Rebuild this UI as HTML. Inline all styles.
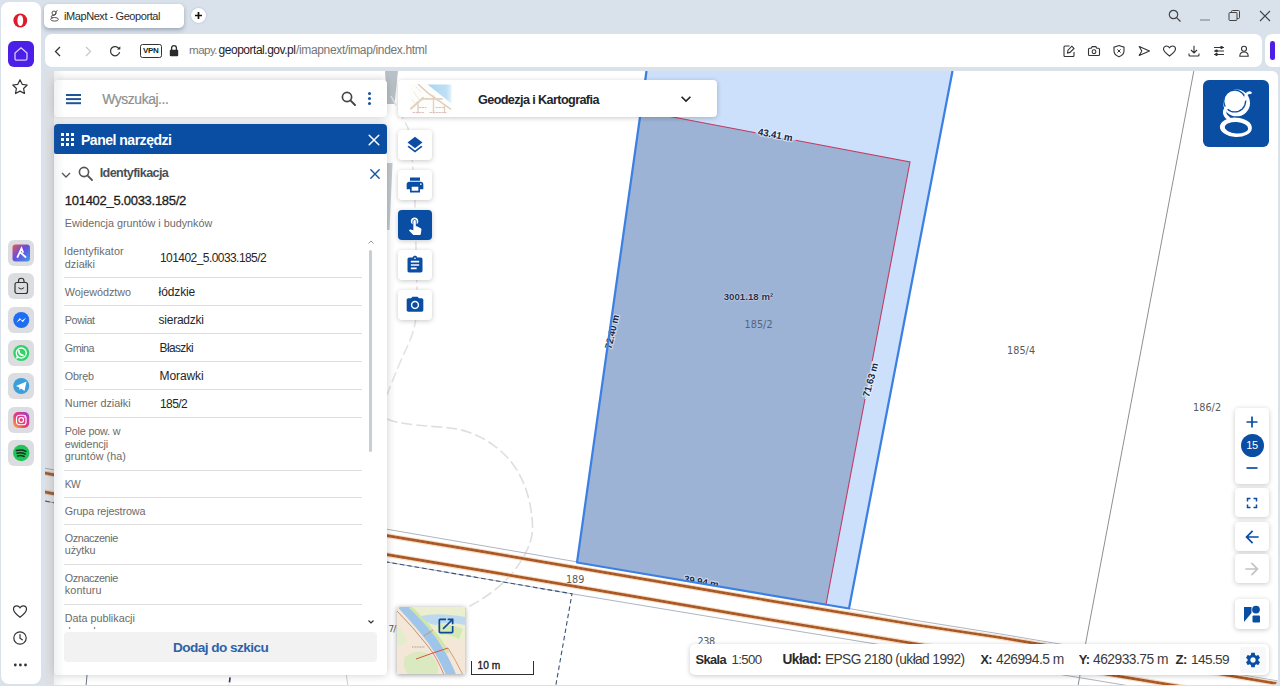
<!DOCTYPE html>
<html lang="pl"><head><meta charset="utf-8"><title>iMapNext - Geoportal</title>
<style>
*{box-sizing:border-box;margin:0;padding:0}
html,body{width:1280px;height:686px;overflow:hidden;background:#d9e1ea;font-family:"Liberation Sans",sans-serif;}
.abs{position:absolute}
#side{left:.5px;top:2px;width:40px;height:681.500px;background:#fff;border-radius:8px}
#tab{left:44px;top:4px;width:139.700px;height:23.800px;background:#fff;border-radius:5px;box-shadow:0 2px 4px rgba(60,75,100,.4);font-size:11px;color:#222;line-height:23px;padding-left:20px;letter-spacing:-.1px}
#newtab{left:190.700px;top:7.800px;width:15.600px;height:15.600px;border-radius:50%;background:#fff;box-shadow:0 0 2px rgba(60,80,110,.3)}
#addr{left:44.5px;top:34px;width:1217.5px;height:32.5px;background:#fff;border-radius:7px}
#addr2{left:1264.500px;top:34px;width:20px;height:32.5px;background:#fff;border-radius:7px}
#page{left:44.5px;top:70.700px;width:1233.5px;height:614.300px;background:#fff;border-radius:6px;overflow:hidden}
.card{position:absolute;background:#fff;border-radius:4px;box-shadow:0 1px 5px rgba(0,0,0,.22)}
.lbl{position:absolute;font-size:11px;color:#5a5a5a;white-space:nowrap}
.ms{position:absolute;font-size:9.5px;font-weight:bold;color:#1d2f4f;white-space:nowrap;transform-origin:center;text-shadow:0 0 2px #fff,0 0 2px #fff}
.row{position:absolute;left:10px;width:299px;border-bottom:1px solid #dcdcdc;font-size:11px;color:#666}
.row .k{position:absolute;left:0;line-height:13px}
.row .v{position:absolute;left:95px;font-size:12px;color:#222}
.k{position:absolute;left:64px;font-size:10.8px;color:#6b6b6b;white-space:nowrap;line-height:13px;letter-spacing:-.05px}
.v{position:absolute;left:159px;font-size:12px;color:#262626;white-space:nowrap;line-height:14px;letter-spacing:-.2px}
.sep{position:absolute;left:64px;width:298px;height:1px;background:#dedede}
.st{top:652px;font-size:13.2px;color:#333;white-space:nowrap;letter-spacing:-.25px}
.st b{color:#222}
.mt{font:bold 9.7px "Liberation Sans",sans-serif;fill:#1b2a48;stroke:rgba(255,255,255,.5);stroke-width:2.2px;paint-order:stroke;stroke-linejoin:round;letter-spacing:-.1px}
.tx{position:absolute;white-space:nowrap}
</style></head><body>
<!-- browser chrome -->
<div id="side" class="abs"></div>
<div id="tab" class="abs"></div><div class="tx" style="left:64.00px;top:9.00px;font:normal 11px/15px 'Liberation Sans',sans-serif;color:#2c2c2c;letter-spacing:-0.426px;">iMapNext - Geoportal</div>
<div id="newtab" class="abs"></div>
<div id="addr" class="abs"></div>
<div id="addr2" class="abs"></div>
<div id="page" class="abs">
<div class="abs" id="g" style="left:-44.500px;top:-70.700px;width:1280px;height:686px">
<svg class="abs" style="left:0;top:0" width="1280" height="686" viewBox="0 0 1280 686">
<defs><filter id="bl" x="-5%" y="-50%" width="110%" height="200%"><feGaussianBlur stdDeviation="0.7"/></filter><filter id="bl2" x="-5%" y="-50%" width="110%" height="200%"><feGaussianBlur stdDeviation="0.45"/></filter></defs>
<!-- faint background lines -->
<polygon points="385,71 398,71 394.5,104 387,104" fill="#b9c1c6"/><polygon points="387,163 392.5,163 389.5,230 387,230" fill="#c3c9ce"/>
<path d="M391 96 L408 128 Q414 165 415 205 L417 290 Q419 322 408 345 Q398 366 387 395" stroke="#e2e2e2" stroke-width="1.500" fill="none" stroke-dasharray="11 4"/>
<path d="M387 419 C400 425 430 426 450 428 S490 440 505 455 S528 490 531 510 S533 540 524 556 S500 590 470 606 S460 610 452 613" stroke="#dedede" stroke-width="1.600" fill="none" stroke-dasharray="11 4"/>
<path d="M87.500 670 L86 686" stroke="#6a7484" stroke-width="1" fill="none"/><path d="M231 670 L229 686" stroke="#2a3a5c" stroke-width="1.600" fill="none" stroke-dasharray="5 2.500"/><path d="M345.500 670 L348 686" stroke="#c9cdd3" stroke-width="1" fill="none"/>
<!-- parcels -->
<polygon points="646.5,71 952.5,71 849,608.5 577,562.5" fill="#ccdffb"/>
<polygon points="641.2,111 910,162 826,604.5 577,562.5" fill="#9db3d5"/>
<!-- grey parcel lines -->
<path d="M1194 70 L1087 636 L1078 686" stroke="#8f8f8f" stroke-width="1" fill="none"/>
<path d="M38 467 L49 469 L378 527.700 L577 561.900 M849 608.500 L920 621.100 L1000 633.900 L1290 683" stroke="#a4adba" stroke-width="0.9" fill="none"/>
<path d="M38 499.800 L49 501.800 L380 560.8 L572 593.8 L740 621.7 L870 643 L1130 686" stroke="#a4adba" stroke-width="0.9" fill="none"/>
<path d="M38 499.800 L49 501.800 L380 560.8 L572 593.8 L555.7 686" stroke="#3a5178" stroke-width="1.1" fill="none" stroke-dasharray="4.5 3"/>
<!-- measurement outline (red), broken under labels -->
<path d="M641.2 111 L755.5 132.7 M795.5 140.3 L910 162 L872.200 361 M865 399 L826 604.500" stroke="#c43c62" stroke-width="1.1" fill="none"/>
<g class="mtg">
<text x="775.3" y="134.6" transform="rotate(10.76 775.3 134.6)" text-anchor="middle" dy="3.45" class="mt">43.41 m</text>
<text x="611.85" y="331.75" transform="rotate(-76.8 611.85 331.75)" text-anchor="middle" dy="3.45" class="mt">72.40 m</text>
<text x="870.3" y="379.8" transform="rotate(-74.6 870.3 379.8)" text-anchor="middle" dy="3.45" class="mt">71.63 m</text>
<text x="701.3" y="581.6" transform="rotate(9.6 701.3 581.6)" text-anchor="middle" dy="3.45" class="mt">39.94 m</text>
</g>
<polygon points="640,573.600 760,594 760,600 640,580" fill="#fff"/>
<!-- selection outlines -->
<path d="M646.5 71 L577 562.5 L849 608.5 L952.5 71" stroke="#3b80e2" stroke-width="2.25" fill="none" stroke-linejoin="round"/>
<!-- road brown lines -->
<g filter="url(#bl)">
<path d="M38 471.8 L49 473.8 L387 535.7 L486 552.2 L660 581.9 L740 595.7 L920 625.5 L1000 637.5 L1220 674.0 L1290 685.8" stroke="#f6dfc8" stroke-width="5" fill="none"/>
<path d="M38 490.8 L49 492.8 L387 554.7 L486 571.2 L660 600.9 L740 614.7 L920 644.5 L1000 656.5 L1220 693.0 L1290 704.8" stroke="#f6dfc8" stroke-width="5" fill="none"/>
</g>
<g filter="url(#bl2)">
<path d="M38 471.8 L49 473.8 L387 535.7 L486 552.2 L660 581.9 L740 595.7 L920 625.5 L1000 637.5 L1220 674.0 L1290 685.8" stroke="#b05f2c" stroke-width="2.7" fill="none"/>
<path d="M38 490.8 L49 492.8 L387 554.7 L486 571.2 L660 600.9 L740 614.7 L920 644.5 L1000 656.5 L1220 693.0 L1290 704.8" stroke="#b05f2c" stroke-width="2.7" fill="none"/>
<path d="M38 471.8 L49 473.8 L387 535.7 L486 552.2 L660 581.9 L740 595.7 L920 625.5 L1000 637.5 L1220 674.0 L1290 685.8" stroke="#8c4418" stroke-width="1.8" fill="none" stroke-dasharray="2.5 2.5" opacity=".4"/>
<path d="M38 490.8 L49 492.8 L387 554.7 L486 571.2 L660 600.9 L740 614.7 L920 644.5 L1000 656.5 L1220 693.0 L1290 704.8" stroke="#8c4418" stroke-width="1.8" fill="none" stroke-dasharray="2.5 2.5" opacity=".4"/>
</g>

</svg>
<div class="tx" style="left:744.50px;top:318.00px;font:normal 9.7px/13px 'DejaVu Sans','Liberation Sans',sans-serif;color:#55647e;letter-spacing:0.036px;">185/2</div>
<div class="tx" style="left:1007.00px;top:344.00px;font:normal 9.7px/13px 'DejaVu Sans','Liberation Sans',sans-serif;color:#5a5a5a;letter-spacing:0.036px;">185/4</div>
<div class="tx" style="left:1193.10px;top:401.00px;font:normal 9.7px/13px 'DejaVu Sans','Liberation Sans',sans-serif;color:#5a5a5a;letter-spacing:0.011px;">186/2</div>
<div class="tx" style="left:565.90px;top:573.00px;font:normal 9.7px/13px 'DejaVu Sans','Liberation Sans',sans-serif;color:#5a5a5a;letter-spacing:-0.013px;">189</div>
<div class="tx" style="left:697.50px;top:635.00px;font:normal 9.7px/13px 'DejaVu Sans','Liberation Sans',sans-serif;color:#5a5a5a;letter-spacing:-0.413px;">238</div>
<div class="tx" style="left:388.50px;top:623.00px;font:normal 8.92px/12px 'DejaVu Sans','Liberation Sans',sans-serif;color:#5a5a5a;letter-spacing:-0.850px;">7/</div>
<div class="tx" style="left:723.70px;top:290.00px;font:bold 9.6px/13px 'Liberation Sans',sans-serif;color:#1f2d4a;letter-spacing:0.047px;text-shadow:0 0 2px rgba(255,255,255,.7),0 0 1px rgba(255,255,255,.7);">3001.18 m²</div>

<!-- search box -->
<div class="card" style="left:54px;top:80.400px;width:333px;height:36.600px;box-shadow:0 0 9px rgba(0,0,0,.2)"></div>
<div class="abs" style="left:66.200px;top:94.300px;width:15.300px;height:1.900px;background:#1d569a;box-shadow:0 4.100px 0 #1d569a,0 8.200px 0 #1d569a"></div>
<div class="tx" style="left:102.30px;top:91.00px;font:normal 13.8px/18px 'Liberation Sans',sans-serif;color:#8f8f8f;letter-spacing:-0.387px;-webkit-text-stroke:.2px #8f8f8f;">Wyszukaj...</div>
<svg class="abs" style="left:340px;top:90px" width="18" height="18" viewBox="0 0 18 18"><circle cx="7" cy="7" r="4.6" fill="none" stroke="#444" stroke-width="1.7"/><path d="M10.4 10.4 L15 15" stroke="#444" stroke-width="1.9" stroke-linecap="round"/></svg>
<div class="abs" style="left:367.5px;top:92px;width:3px;height:3px;border-radius:50%;background:#17559f;box-shadow:0 5px 0 #17559f,0 10px 0 #17559f"></div>
<!-- tools panel -->
<div class="card" style="left:54px;top:124px;width:332.500px;height:550.500px;border-radius:4px;box-shadow:0 0 9px rgba(0,0,0,.2)"></div>
<div class="abs" style="left:54px;top:124px;width:333px;height:30px;background:#0a4ea3;border-radius:4px 4px 2px 2px"></div>
<div class="abs" id="grid9" style="left:61px;top:133px;width:3px;height:3px;background:#fff;box-shadow:5px 0 #fff,10px 0 #fff,0 5px #fff,5px 5px #fff,10px 5px #fff,0 10px #fff,5px 10px #fff,10px 10px #fff"></div>
<div class="tx" style="left:81.00px;top:131.00px;font:bold 14px/19px 'Liberation Sans',sans-serif;color:#fff;letter-spacing:-0.490px;">Panel narzędzi</div>
<svg class="abs" style="left:367.200px;top:132.600px" width="14" height="14" viewBox="0 0 14 14"><path d="M2.200 2.200 L11.800 11.800 M11.800 2.200 L2.200 11.800" stroke="#fff" stroke-width="1.500" stroke-linecap="round"/></svg>
<svg class="abs" style="left:60px;top:170px" width="12" height="10" viewBox="0 0 12 10"><path d="M2 3 L6 7 L10 3" stroke="#555" stroke-width="1.3" fill="none"/></svg>
<svg class="abs" style="left:77px;top:165px" width="18" height="18" viewBox="0 0 18 18"><circle cx="7" cy="7" r="4.6" fill="none" stroke="#555" stroke-width="1.6"/><path d="M10.4 10.4 L15 15" stroke="#555" stroke-width="1.8" stroke-linecap="round"/></svg>
<div class="tx" style="left:99.70px;top:165.00px;font:bold 12.62px/17px 'Liberation Sans',sans-serif;color:#4a4f57;letter-spacing:-0.600px;">Identyfikacja</div>
<svg class="abs" style="left:369.200px;top:168.400px" width="12" height="12" viewBox="0 0 12 12"><path d="M1.800 1.800 L10.200 10.200 M10.200 1.800 L1.800 10.200" stroke="#17559f" stroke-width="1.400" stroke-linecap="round"/></svg>
<div class="tx" style="left:64.80px;top:192.00px;font:normal 13px/17px 'Liberation Sans',sans-serif;color:#1c1c1c;letter-spacing:-0.277px;-webkit-text-stroke:.3px #1c1c1c;">101402_5.0033.185/2</div>
<div class="tx" style="left:64.80px;top:216.00px;font:normal 10.8px/15px 'Liberation Sans',sans-serif;color:#6b6b6b;letter-spacing:-0.005px;">Ewidencja gruntów i budynków</div>
<div class="tx" style="left:63.80px;top:244.00px;font:normal 10.8px/15px 'Liberation Sans',sans-serif;color:#6b6b6b;letter-spacing:0.082px;">Identyfikator</div>
<div class="tx" style="left:64.80px;top:257.00px;font:normal 10.8px/15px 'Liberation Sans',sans-serif;color:#6b6b6b;letter-spacing:0.016px;">działki</div>
<div class="tx" style="left:64.80px;top:285.00px;font:normal 10.8px/15px 'Liberation Sans',sans-serif;color:#6b6b6b;letter-spacing:-0.011px;">Województwo</div>
<div class="tx" style="left:64.80px;top:313.00px;font:normal 10.8px/15px 'Liberation Sans',sans-serif;color:#6b6b6b;letter-spacing:-0.421px;">Powiat</div>
<div class="tx" style="left:64.80px;top:341.00px;font:normal 10.8px/15px 'Liberation Sans',sans-serif;color:#6b6b6b;letter-spacing:-0.524px;">Gmina</div>
<div class="tx" style="left:64.80px;top:369.00px;font:normal 10.8px/15px 'Liberation Sans',sans-serif;color:#6b6b6b;letter-spacing:-0.201px;">Obręb</div>
<div class="tx" style="left:64.80px;top:396.00px;font:normal 10.8px/15px 'Liberation Sans',sans-serif;color:#6b6b6b;letter-spacing:0.033px;">Numer działki</div>
<div class="tx" style="left:64.80px;top:424.00px;font:normal 10.8px/15px 'Liberation Sans',sans-serif;color:#6b6b6b;letter-spacing:-0.192px;">Pole pow. w</div>
<div class="tx" style="left:64.80px;top:437.00px;font:normal 10.8px/15px 'Liberation Sans',sans-serif;color:#6b6b6b;letter-spacing:-0.126px;">ewidencji</div>
<div class="tx" style="left:64.80px;top:449.00px;font:normal 10.8px/15px 'Liberation Sans',sans-serif;color:#6b6b6b;letter-spacing:0.044px;">gruntów (ha)</div>
<div class="tx" style="left:64.80px;top:478.00px;font:normal 10.21px/14px 'Liberation Sans',sans-serif;color:#6b6b6b;letter-spacing:-0.600px;">KW</div>
<div class="tx" style="left:64.80px;top:504.00px;font:normal 10.8px/15px 'Liberation Sans',sans-serif;color:#6b6b6b;letter-spacing:-0.147px;">Grupa rejestrowa</div>
<div class="tx" style="left:64.80px;top:531.00px;font:normal 10.8px/15px 'Liberation Sans',sans-serif;color:#6b6b6b;letter-spacing:-0.401px;">Oznaczenie</div>
<div class="tx" style="left:64.80px;top:543.00px;font:normal 10.8px/15px 'Liberation Sans',sans-serif;color:#6b6b6b;letter-spacing:-0.100px;">użytku</div>
<div class="tx" style="left:64.80px;top:571.00px;font:normal 10.8px/15px 'Liberation Sans',sans-serif;color:#6b6b6b;letter-spacing:-0.401px;">Oznaczenie</div>
<div class="tx" style="left:64.80px;top:583.00px;font:normal 10.8px/15px 'Liberation Sans',sans-serif;color:#6b6b6b;letter-spacing:0.132px;">konturu</div>
<div class="tx" style="left:64.80px;top:611.00px;font:normal 10.8px/15px 'Liberation Sans',sans-serif;color:#6b6b6b;letter-spacing:-0.016px;">Data publikacji</div>
<div class="tx" style="left:160.00px;top:250.00px;font:normal 12px/16px 'Liberation Sans',sans-serif;color:#262626;letter-spacing:-0.562px;">101402_5.0033.185/2</div>
<div class="tx" style="left:158.60px;top:284.00px;font:normal 12px/16px 'Liberation Sans',sans-serif;color:#262626;letter-spacing:-0.113px;">łódzkie</div>
<div class="tx" style="left:158.60px;top:312.00px;font:normal 12px/16px 'Liberation Sans',sans-serif;color:#262626;letter-spacing:-0.260px;">sieradzki</div>
<div class="tx" style="left:159.60px;top:340.00px;font:normal 11.92px/16px 'Liberation Sans',sans-serif;color:#262626;letter-spacing:-0.600px;">Błaszki</div>
<div class="tx" style="left:159.60px;top:368.00px;font:normal 12px/16px 'Liberation Sans',sans-serif;color:#262626;letter-spacing:-0.101px;">Morawki</div>
<div class="tx" style="left:160.00px;top:396.00px;font:normal 12px/16px 'Liberation Sans',sans-serif;color:#262626;letter-spacing:-0.589px;">185/2</div>
<div class="sep" style="top:276.8px"></div>
<div class="sep" style="top:304.8px"></div>
<div class="sep" style="top:332.9px"></div>
<div class="sep" style="top:360.8px"></div>
<div class="sep" style="top:388.8px"></div>
<div class="sep" style="top:417.0px"></div>
<div class="sep" style="top:469.5px"></div>
<div class="sep" style="top:496.6px"></div>
<div class="sep" style="top:523.7px"></div>
<div class="sep" style="top:563.9px"></div>
<div class="sep" style="top:603.7px"></div>
<div class="abs" style="left:60px;top:624px;width:100px;height:5.1px;overflow:hidden"><div class="tx" style="left:4.8px;top:1.6px;font:10.8px/10.8px 'Liberation Sans',sans-serif;color:#6b6b6b;letter-spacing:-.05px">danych</div></div>

<!-- scrollbar -->
<div class="abs" style="left:369px;top:250px;width:3px;height:202px;background:#c9ced6;border-radius:2px"></div>
<svg class="abs" style="left:367px;top:239px" width="8" height="6" viewBox="0 0 8 6"><path d="M1.5 4.5 L4 2 L6.5 4.5" stroke="#999" stroke-width="1" fill="none"/></svg>
<svg class="abs" style="left:367px;top:619px" width="8" height="6" viewBox="0 0 8 6"><path d="M1.5 1.5 L4 4 L6.5 1.5" stroke="#333" stroke-width="1.2" fill="none"/></svg>
<div class="abs" style="left:64px;top:632px;width:313px;height:30px;background:#f2f2f3;border-radius:4px"></div><div class="tx" style="left:173.00px;top:639.00px;font:bold 13.6px/18px 'Liberation Sans',sans-serif;color:#2c62a8;letter-spacing:-0.548px;">Dodaj do szkicu</div>
<!-- layer selector -->
<div class="card" style="left:398px;top:80px;width:319px;height:37px"></div>
<svg class="abs" style="left:410px;top:84px" width="41.500" height="30" viewBox="0 0 41.500 30"><defs><linearGradient id="sky" x1="0" y1="0" x2="1" y2="0"><stop offset="0" stop-color="#a9d4f2"/><stop offset=".8" stop-color="#bfe0f6"/><stop offset="1" stop-color="#e6f3fb"/></linearGradient></defs><rect width="41.500" height="30" fill="#fdfdfc"/><polygon points="17.500,0.500 41.500,0.500 41.500,19.500" fill="url(#sky)"/><g fill="none" stroke-linecap="round" opacity=".75"><path d="M8.500 0.500 L18 9 L40.500 25" stroke="#d2bba4" stroke-width="1.500" stroke-dasharray="1.800 1.200"/><path d="M13 14 L1 24.500" stroke="#dcc3a6" stroke-width="2.200" stroke-dasharray="1.500 1"/><path d="M12.500 14.800 L32 14.800" stroke="#d9c2a8" stroke-width="1.800" stroke-dasharray="2 1"/><path d="M8 18.500 V29 M23.500 12 V29 M34.500 21 V29" stroke="#d8bfa8" stroke-width="1.400" stroke-dasharray="2 .8"/><path d="M3 28.500 H14 M20 28.500 H36 M9 23.500 H16 M26 23.500 H34" stroke="#d0a8a8" stroke-width="1" stroke-dasharray="1.500 1.500"/><path d="M4 8 L10 17 M6 3 L11 8 M2 16 L6 20" stroke="#e3d6cc" stroke-width="1" stroke-dasharray="1 1.600"/></g></svg>
<div class="tx" style="left:478.00px;top:92.00px;font:bold 12.63px/17px 'Liberation Sans',sans-serif;color:#22252b;letter-spacing:-0.600px;">Geodezja i Kartografia</div>
<svg class="abs" style="left:676px;top:89px" width="20" height="20" viewBox="0 0 24 24" fill="#222"><path d="M16.59 8.59L12 13.17 7.41 8.59 6 10l6 6 6-6z"/></svg>
<!-- tool buttons -->
<div class="card" style="left:398px;top:130px;width:34px;height:30px;background:#fff"><svg class="abs" style="left:7px;top:5px" width="20" height="20" viewBox="0 0 24 24" fill="#0a4ea3"><path d="M11.99 18.54l-7.37-5.73L3 14.07l9 7 9-7-1.63-1.27-7.38 5.74zM12 16l7.36-5.73L21 9l-9-7-9 7 1.63 1.27L12 16z"/></svg></div>
<div class="card" style="left:398px;top:170px;width:34px;height:30px;background:#fff"><svg class="abs" style="left:7px;top:5px" width="20" height="20" viewBox="0 0 24 24" fill="#0a4ea3"><path d="M19 8H5c-1.66 0-3 1.34-3 3v6h4v4h12v-4h4v-6c0-1.66-1.34-3-3-3zm-3 11H8v-5h8v5zm3-7c-.55 0-1-.45-1-1s.45-1 1-1 1 .45 1 1-.45 1-1 1zm-1-9H6v4h12V3z"/></svg></div>
<div class="card" style="left:398px;top:210px;width:34px;height:30px;background:#0a4ea3"><svg class="abs" style="left:7px;top:5px" width="20" height="20" viewBox="0 0 24 24" fill="#fff"><path d="M9 11.24V7.5C9 6.12 10.12 5 11.5 5S14 6.12 14 7.5v3.74c1.21-.81 2-2.18 2-3.74C16 5.01 13.99 3 11.5 3S7 5.01 7 7.5c0 1.56.79 2.93 2 3.74zm9.84 4.63l-4.54-2.26c-.17-.07-.35-.11-.54-.11H13v-6c0-.83-.67-1.5-1.5-1.5S10 6.67 10 7.5v10.74l-3.43-.72c-.08-.01-.15-.03-.24-.03-.31 0-.59.13-.79.33l-.79.8 4.94 4.94c.27.27.65.44 1.06.44h6.79c.75 0 1.33-.55 1.44-1.28l.75-5.27c.01-.07.02-.14.02-.2 0-.62-.38-1.16-.91-1.38z"/></svg></div>
<div class="card" style="left:398px;top:250px;width:34px;height:30px;background:#fff"><svg class="abs" style="left:7px;top:5px" width="20" height="20" viewBox="0 0 24 24" fill="#0a4ea3"><path d="M19 3h-4.18C14.4 1.84 13.3 1 12 1c-1.3 0-2.4.84-2.82 2H5c-1.1 0-2 .9-2 2v14c0 1.1.9 2 2 2h14c1.1 0 2-.9 2-2V5c0-1.1-.9-2-2-2zm-7 0c.55 0 1 .45 1 1s-.45 1-1 1-1-.45-1-1 .45-1 1-1zm2 14H7v-2h7v2zm3-4H7v-2h10v2zm0-4H7V7h10v2z"/></svg></div>
<div class="card" style="left:398px;top:290px;width:34px;height:30px;background:#fff"><svg class="abs" style="left:7px;top:5px" width="20" height="20" viewBox="0 0 24 24" fill="#0a4ea3"><circle cx="12" cy="12" r="3.2"/><path d="M9 2L7.17 4H4c-1.1 0-2 .9-2 2v12c0 1.1.9 2 2 2h16c1.1 0 2-.9 2-2V6c0-1.1-.9-2-2-2h-3.17L15 2H9zm3 15c-2.76 0-5-2.24-5-5s2.24-5 5-5 5 2.24 5 5-2.24 5-5 5z"/></svg></div>

<!-- logo -->
<div class="abs" style="left:1203px;top:80px;width:66px;height:67px;background:#0a4ea3;border-radius:6px"></div>
<svg class="abs" style="left:1203px;top:80px" width="66" height="67" viewBox="0 0 66 67"><circle cx="33.600" cy="22.900" r="13.400" fill="#fff"/><circle cx="31.700" cy="21" r="11.600" fill="#0a4ea3"/><circle cx="31.700" cy="21" r="10.300" fill="#fff"/><path d="M42.300 19.500 Q42.300 12.200 47.500 12.700" stroke="#fff" stroke-width="2.600" fill="none" stroke-linecap="round"/><path d="M23.600 27.600 Q18.500 34 26.500 39.200" stroke="#fff" stroke-width="3.400" fill="none" stroke-linecap="round"/><ellipse cx="32.900" cy="47.400" rx="16" ry="9.700" fill="#fff" transform="rotate(3 34 46.900)"/><ellipse cx="33.500" cy="47.800" rx="11.700" ry="5.700" fill="#0a4ea3" transform="rotate(3 34 46.900)"/></svg>
<!-- zoom controls -->
<div class="card" style="left:1235px;top:408px;width:34px;height:76px"></div>
<svg class="abs" style="left:1245px;top:415px" width="14" height="14" viewBox="0 0 14 14"><path d="M7 1.5 V12.5 M1.5 7 H12.5" stroke="#0a4ea3" stroke-width="1.7"/></svg>
<div class="abs" style="left:1240.5px;top:434px;width:23px;height:23px;border-radius:50%;background:#0a4ea3;color:#fff;font-size:11px;text-align:center;line-height:23px;letter-spacing:-.3px">15</div>
<svg class="abs" style="left:1245px;top:461px" width="14" height="14" viewBox="0 0 14 14"><path d="M1.5 7 H12.5" stroke="#0a4ea3" stroke-width="1.7"/></svg>
<div class="card" style="left:1235px;top:488px;width:34px;height:29px"><svg class="abs" style="left:8px;top:5.5px" width="18" height="18" viewBox="0 0 24 24" fill="#0a4ea3"><path d="M7 14H5v5h5v-2H7v-3zm-2-4h2V7h3V5H5v5zm12 7h-3v2h5v-5h-2v3zM14 5v2h3v3h2V5h-5z"/></svg></div>
<div class="card" style="left:1235px;top:522px;width:34px;height:29px"><svg class="abs" style="left:7px;top:4.5px" width="20" height="20" viewBox="0 0 24 24" fill="#0a4ea3"><path d="M20 11H7.83l5.59-5.59L12 4l-8 8 8 8 1.41-1.41L7.83 13H20v-2z"/></svg></div>
<div class="card" style="left:1235px;top:554px;width:34px;height:29px"><svg class="abs" style="left:7px;top:4.5px" width="20" height="20" viewBox="0 0 24 24" fill="#c4c4c4"><path d="M12 4l-1.410 1.410L16.170 11H4v2h12.170l-5.580 5.590L12 20l8-8z"/></svg></div>
<div class="card" style="left:1235px;top:599px;width:34px;height:30px"><svg class="abs" style="left:8px;top:6px" width="18" height="18" viewBox="0 0 18 18" fill="#0a4ea3"><path d="M1 2 H8.5 V8 L1 17 Z"/><circle cx="13" cy="4.6" r="3.9"/><rect x="9.5" y="10.5" width="7.5" height="7" rx="1"/></svg></div>
<!-- status bar -->
<div class="card" style="left:690px;top:644px;width:579px;height:31px;border-radius:5px"></div>
<div class="tx" style="left:695.50px;top:651.00px;font:bold 12.86px/17px 'Liberation Sans',sans-serif;color:#2b2b2b;letter-spacing:-0.600px;">Skala</div><div class="tx" style="left:731.54px;top:651.00px;font:normal 13.21px/18px 'Liberation Sans',sans-serif;color:#3a3a3a;letter-spacing:-0.600px;">1:500</div><div class="tx" style="left:782.50px;top:651.00px;font:bold 13.78px/18px 'Liberation Sans',sans-serif;color:#2b2b2b;letter-spacing:-0.600px;">Układ:</div><div class="tx" style="left:825.00px;top:651.00px;font:normal 13.74px/18px 'Liberation Sans',sans-serif;color:#3a3a3a;letter-spacing:-0.600px;">EPSG 2180 (układ 1992)</div><div class="tx" style="left:980.50px;top:652.00px;font:bold 12.7px/17px 'Liberation Sans',sans-serif;color:#2b2b2b;letter-spacing:-0.646px;">X:</div><div class="tx" style="left:996.00px;top:651.00px;font:normal 13.8px/18px 'Liberation Sans',sans-serif;color:#3a3a3a;letter-spacing:-0.520px;">426994.5 m</div><div class="tx" style="left:1078.70px;top:651.00px;font:bold 12.92px/17px 'Liberation Sans',sans-serif;color:#2b2b2b;letter-spacing:-0.600px;">Y:</div><div class="tx" style="left:1093.00px;top:651.00px;font:normal 13.8px/18px 'Liberation Sans',sans-serif;color:#3a3a3a;letter-spacing:-0.505px;">462933.75 m</div><div class="tx" style="left:1175.50px;top:651.00px;font:bold 13.1px/18px 'Liberation Sans',sans-serif;color:#2b2b2b;letter-spacing:-0.600px;">Z:</div><div class="tx" style="left:1191.01px;top:651.00px;font:normal 13.63px/18px 'Liberation Sans',sans-serif;color:#3a3a3a;letter-spacing:-0.600px;">145.59</div>
<div class="abs" style="left:1240px;top:647px;width:26px;height:26px;background:#f7f8fa;border-radius:3px"></div>
<svg class="abs" style="left:1244px;top:651px" width="18" height="18" viewBox="0 0 24 24" fill="#0a4ea3"><path d="M19.14 12.94c.04-.3.06-.61.06-.94 0-.32-.02-.64-.07-.94l2.03-1.58c.18-.14.23-.41.12-.61l-1.92-3.32c-.12-.22-.37-.29-.59-.22l-2.39.96c-.5-.38-1.03-.7-1.62-.94l-.36-2.54c-.04-.24-.24-.41-.48-.41h-3.84c-.24 0-.43.17-.47.41l-.36 2.54c-.59.24-1.13.57-1.62.94l-2.39-.96c-.22-.08-.47 0-.59.22L2.74 8.870c-.12.21-.08.47.12.61l2.03 1.580c-.05.3-.09.63-.09.94s.02.64.07.94l-2.030 1.580c-.18.14-.23.41-.12.61l1.920 3.320c.12.22.37.29.59.22l2.390-.96c.5.38 1.030.7 1.620.94l.36 2.540c.05.24.24.41.48.41h3.840c.24 0 .44-.17.47-.41l.36-2.540c.59-.24 1.130-.56 1.620-.94l2.390.96c.22.08.47 0 .59-.22l1.920-3.320c.12-.22.07-.47-.12-.61l-2.010-1.580zM12 15.600c-1.980 0-3.600-1.620-3.600-3.600s1.620-3.600 3.600-3.600 3.600 1.620 3.600 3.600-1.620 3.600-3.600 3.600z"/></svg>
<!-- minimap -->
<div class="abs" style="left:397px;top:607px;width:67.500px;height:67px;box-shadow:0 1px 5px rgba(0,0,0,.4);background:#efe7d6;overflow:hidden">
<svg width="68" height="68" viewBox="0 0 68 68"><rect width="68" height="68" fill="#f4e7d8"/><path d="M10 0 H68 V34 Q54 30 46 36 Z" fill="#eceed0"/><path d="M24 9 Q40 5 68 10 V18 Q50 14 38 18 Q28 16 24 9Z" fill="#bcd9f0"/><path d="M40 18 Q52 16 66 22 L62 32 Q50 26 44 28Z" fill="#d6e8b4"/><path d="M8 50 Q20 40 34 48 Q44 58 40 68 H12 Q4 60 8 50Z" fill="#dbe9c0"/><path d="M0 20 Q8 24 10 34 Q4 40 0 38Z" fill="#e3edcb"/><path d="M5 -2 Q22 16 35 33 Q47 50 55 70" stroke="#9fc6ea" stroke-width="9.500" fill="none"/><path d="M13 0 Q28 14 42 32 Q48 40 51 46" stroke="#cfe6a6" stroke-width="3" fill="none"/><path d="M0 4 Q16 20 30 38 Q40 50 47 68" stroke="#c98e6e" stroke-width="1" fill="none"/><path d="M51 41 Q58 52 66 68" stroke="#d49a7a" stroke-width="1" fill="none"/><path d="M19 52 L36 46 L51 41" stroke="#cf5a3e" stroke-width="1" fill="none"/><path d="M27 29 L36 23" stroke="#c9906e" stroke-width=".9" fill="none"/><path d="M15 40 H28" stroke="#8a8a8a" stroke-width=".8" stroke-dasharray="1 .6" fill="none"/></svg>
</div>
<svg class="abs" style="left:436px;top:616px" width="20" height="20" viewBox="0 0 24 24" fill="#0b4a94"><path d="M19 19H5V5h7V3H5c-1.110 0-2 .9-2 2v14c0 1.100.89 2 2 2h14c1.100 0 2-.9 2-2v-7h-2v7zM14 3v2h3.590l-9.830 9.830 1.410 1.410L19 6.410V10h2V3h-7z"/></svg>
<div class="abs" style="left:44.500px;top:70px;width:9.500px;height:616px;background:rgba(96,106,120,.22);pointer-events:none"></div>
<div class="abs" style="left:54px;top:70px;width:11px;height:616px;background:linear-gradient(90deg,rgba(96,106,120,.09),rgba(96,106,120,0));pointer-events:none"></div>
<!-- scale bar -->
<div class="abs" style="left:470.500px;top:660.800px;width:63.600px;height:14px;border:1.900px solid #2e2e2e;border-top:none"></div>
<div class="tx" style="left:477.50px;top:659.00px;font:normal 10.2px/14px 'Liberation Sans',sans-serif;color:#222;letter-spacing:0.013px;-webkit-text-stroke:.35px #222;">10 m</div>

</div>
</div>
<!-- sidebar icons -->
<svg class="abs" style="left:12px;top:12px" width="16" height="17" viewBox="0 0 16 17"><ellipse cx="8.300" cy="8.500" rx="6.900" ry="6.900" fill="#e0192d"/><ellipse cx="8.300" cy="8.500" rx="2.900" ry="5.500" fill="#fff"/></svg>
<div class="abs" style="left:7.5px;top:40.5px;width:26.500px;height:26.500px;border-radius:6px;background:#4b1fe6"></div>
<svg class="abs" style="left:13px;top:46px" width="16" height="16" viewBox="0 0 16 16"><path d="M2 7 L8 1.800 L14 7 V12.500 Q14 14.200 12.300 14.200 H3.700 Q2 14.200 2 12.500Z" fill="none" stroke="#d9c8ff" stroke-width="1.300" stroke-linejoin="round"/></svg>
<svg class="abs" style="left:11px;top:78px" width="18" height="18" viewBox="0 0 18 18"><path d="M9 1.800 L11.200 6.300 L16.200 7 L12.600 10.500 L13.500 15.500 L9 13.100 L4.500 15.500 L5.400 10.500 L1.800 7 L6.800 6.300Z" fill="none" stroke="#333" stroke-width="1.200" stroke-linejoin="round"/></svg>
<div class="abs" style="left:7.5px;top:239.5px;width:26.5px;height:26px;border-radius:6px;background:#dcdde0"></div><svg class="abs" style="left:7.5px;top:239.5px" width="26.5" height="26" viewBox="0 0 26.5 26"><defs><linearGradient id="ar" x1="0" y1="0" x2="1" y2="1"><stop offset="0" stop-color="#e85d4a"/><stop offset=".45" stop-color="#6a4be0"/><stop offset="1" stop-color="#3aa0e8"/></linearGradient></defs><rect x="4.5" y="4.5" width="17.5" height="17" rx="3" fill="url(#ar)"/><path d="M9.5 17 L13.5 8.5 L15 12 M13 13 L17.5 17" stroke="#fff" stroke-width="1.8" fill="none" stroke-linecap="round"/></svg>
<div class="abs" style="left:7.5px;top:273px;width:26.5px;height:26px;border-radius:6px;background:#dcdde0"></div><svg class="abs" style="left:7.5px;top:273px" width="26.5" height="26" viewBox="0 0 26.5 26"><rect x="7" y="9.5" width="12.5" height="11" rx="2" fill="none" stroke="#333" stroke-width="1.2"/><path d="M10.5 9.500V8a2.750 2.750 0 0 1 5.500 0V9.500" fill="none" stroke="#333" stroke-width="1.2"/><path d="M10.500 14.500q2.750 3 5.500 0" fill="none" stroke="#333" stroke-width="1.1"/></svg>
<div class="abs" style="left:7.5px;top:306.5px;width:26.5px;height:26px;border-radius:6px;background:#dcdde0"></div><svg class="abs" style="left:7.5px;top:306.5px" width="26.5" height="26" viewBox="0 0 26.5 26"><circle cx="13.25" cy="13" r="8" fill="#1f6df2"/><path d="M8.500 15.500 L11.800 11 L14 13.500 L18 10.800 L14.800 15.200 L12.500 12.800Z" fill="#fff"/></svg>
<div class="abs" style="left:7.5px;top:339.5px;width:26.5px;height:26px;border-radius:6px;background:#dcdde0"></div><svg class="abs" style="left:7.5px;top:339.5px" width="26.5" height="26" viewBox="0 0 26.5 26"><circle cx="13.25" cy="13" r="8" fill="#2fd366"/><circle cx="13.250" cy="13" r="5" fill="none" stroke="#fff" stroke-width="1.3"/><path d="M11 10.800q-.5 3.200 4 4.600" stroke="#fff" stroke-width="1.800" fill="none" stroke-linecap="round"/><path d="M7.5 19 L9 15.500 L11 17.800Z" fill="#fff"/></svg>
<div class="abs" style="left:7.5px;top:373px;width:26.5px;height:26px;border-radius:6px;background:#dcdde0"></div><svg class="abs" style="left:7.5px;top:373px" width="26.5" height="26" viewBox="0 0 26.5 26"><circle cx="13.25" cy="13" r="8" fill="#3a9fdc"/><path d="M8 13 L18.500 8.500 L16.500 18 L13 15.500 L11.500 17 L11.300 14.500Z" fill="#fff"/></svg>
<div class="abs" style="left:7.5px;top:406.5px;width:26.5px;height:26px;border-radius:6px;background:#dcdde0"></div><svg class="abs" style="left:7.5px;top:406.5px" width="26.5" height="26" viewBox="0 0 26.5 26"><defs><linearGradient id="ig" x1="0" y1="1" x2="1" y2="0"><stop offset="0" stop-color="#f9b93a"/><stop offset=".4" stop-color="#ee3c6c"/><stop offset="1" stop-color="#9a3bd6"/></linearGradient></defs><rect x="5.250" y="5" width="16" height="16" rx="5" fill="url(#ig)"/><rect x="8.500" y="8.250" width="9.500" height="9.500" rx="2.800" fill="none" stroke="#fff" stroke-width="1.200"/><circle cx="13.250" cy="13" r="2.300" fill="none" stroke="#fff" stroke-width="1.200"/><circle cx="16.200" cy="10.100" r=".7" fill="#fff"/></svg>
<div class="abs" style="left:7.5px;top:439.5px;width:26.5px;height:26px;border-radius:6px;background:#dcdde0"></div><svg class="abs" style="left:7.5px;top:439.5px" width="26.5" height="26" viewBox="0 0 26.5 26"><circle cx="13.25" cy="13" r="8.200" fill="#22c45a"/><path d="M8.500 10.500q5-1.500 9.500.8M9 13.300q4.300-1.200 8.200.7M9.600 15.900q3.500-.9 6.600.6" stroke="#14301f" stroke-width="1.500" fill="none" stroke-linecap="round"/></svg>

<svg class="abs" style="left:12px;top:604px" width="16" height="15" viewBox="0 0 16 15"><path d="M8 13.200 C3 9.500 1.500 7.500 1.500 5.200 C1.500 3.200 3 1.800 4.800 1.800 C6.200 1.800 7.300 2.600 8 3.800 C8.700 2.600 9.800 1.800 11.200 1.800 C13 1.800 14.500 3.200 14.500 5.200 C14.500 7.500 13 9.500 8 13.200Z" fill="none" stroke="#333" stroke-width="1.200"/></svg>
<svg class="abs" style="left:12px;top:630px" width="16" height="16" viewBox="0 0 16 16"><circle cx="8" cy="8" r="6.200" fill="none" stroke="#333" stroke-width="1.200"/><path d="M8 4.500 V8.200 L10.300 9.800" fill="none" stroke="#333" stroke-width="1.200" stroke-linecap="round"/></svg>
<svg class="abs" style="left:13px;top:662px" width="15" height="6" viewBox="0 0 15 6"><circle cx="2.300" cy="3" r="1.400" fill="#333"/><circle cx="7.400" cy="3" r="1.400" fill="#333"/><circle cx="12.500" cy="3" r="1.400" fill="#333"/></svg>
<!-- tab -->
<svg class="abs" style="left:49px;top:9px" width="11" height="13" viewBox="0 0 11 13"><circle cx="5" cy="4" r="2" fill="none" stroke="#444" stroke-width=".9"/><path d="M8.500 1.500 Q7 1.500 7 3.500 Q7 6.500 4 6.500 Q2.200 6.500 2.200 7.800 Q2.200 8.800 4 8.800" fill="none" stroke="#444" stroke-width=".9"/><ellipse cx="5.500" cy="10.300" rx="3.800" ry="1.800" fill="none" stroke="#444" stroke-width=".9"/></svg>
<svg class="abs" style="left:194px;top:11px" width="9" height="9" viewBox="0 0 9 9"><path d="M4.500 1 V8 M1 4.500 H8" stroke="#111" stroke-width="1.700"/></svg>
<!-- nav -->
<svg class="abs" style="left:52px;top:45px" width="12" height="13" viewBox="0 0 12 13"><path d="M8 2 L3.500 6.500 L8 11" fill="none" stroke="#333" stroke-width="1.300"/></svg>
<svg class="abs" style="left:82px;top:45px" width="12" height="13" viewBox="0 0 12 13"><path d="M4 2 L8.500 6.500 L4 11" fill="none" stroke="#c8c8c8" stroke-width="1.300"/></svg>
<svg class="abs" style="left:108px;top:43.500px" width="14" height="14" viewBox="0 0 14 14"><path d="M11.200 5 A4.600 4.600 0 1 0 11.600 8.200" fill="none" stroke="#333" stroke-width="1.250"/><path d="M12.300 2.200 V5.600 H8.900Z" fill="#333"/></svg>
<div class="abs" style="left:139.500px;top:43.500px;width:22.500px;height:14.500px;border:1.100px solid #333;border-radius:2.500px;font-size:8px;font-weight:bold;color:#1c1c1c;text-align:center;line-height:12.500px;letter-spacing:-.25px">VPN</div>
<svg class="abs" style="left:169px;top:44px" width="10" height="13" viewBox="0 0 10 13"><rect x=".8" y="5.800" width="8.400" height="6.400" rx="1" fill="#2a2a2a"/><path d="M2.600 6 V4 a2.400 2.400 0 0 1 4.800 0 V6" fill="none" stroke="#2a2a2a" stroke-width="1.300"/></svg>
<div class="tx" style="left:189.10px;top:42.00px;font:normal 11.64px/16px 'Liberation Sans',sans-serif;color:#767676;letter-spacing:-0.600px;">mapy.</div><div class="tx" style="left:218.60px;top:42.00px;font:normal 12px/16px 'Liberation Sans',sans-serif;color:#1e1e1e;letter-spacing:-0.483px;">geoportal.gov.pl</div><div class="tx" style="left:296.00px;top:42.00px;font:normal 12px/16px 'Liberation Sans',sans-serif;color:#767676;letter-spacing:-0.347px;">/imapnext/imap/index.html</div>
<!-- right toolbar icons -->
<svg class="abs" style="left:1062px;top:44px" width="14" height="14" viewBox="0 0 14 14" fill="none" stroke="#333" stroke-width="1.100"><path d="M7.500 2 H3 Q2 2 2 3 V11.500 Q2 12.500 3 12.500 H11 Q12 12.500 12 11.500 V8"/><path d="M9.800 2.200 L12 4.400 L8 8.400 L5.500 9 L6 6.200Z"/></svg>
<svg class="abs" style="left:1087px;top:44px" width="14" height="14" viewBox="0 0 14 14" fill="none" stroke="#333" stroke-width="1.100"><path d="M1.500 5.200 Q1.500 4.200 2.500 4.200 H4.200 L5.200 2.600 H8.800 L9.800 4.200 H11.500 Q12.500 4.200 12.500 5.200 V10.500 Q12.500 11.500 11.500 11.500 H2.500 Q1.500 11.500 1.500 10.500Z"/><circle cx="7" cy="7.700" r="1.900"/></svg>
<svg class="abs" style="left:1112px;top:44px" width="14" height="14" viewBox="0 0 14 14" fill="none" stroke="#333" stroke-width="1.100"><path d="M7 1.500 L12 3.200 V7 Q12 10.800 7 12.800 Q2 10.800 2 7 V3.200Z"/><path d="M5.400 5.400 L8.600 8.600 M8.600 5.400 L5.400 8.600" stroke-width="1"/></svg>
<svg class="abs" style="left:1137px;top:44px" width="14" height="14" viewBox="0 0 14 14" fill="none" stroke="#333" stroke-width="1.100" stroke-linejoin="round"><path d="M2.200 2.500 L12.500 7 L2.200 11.500 L4.800 7Z"/></svg>
<svg class="abs" style="left:1161.500px;top:44px" width="15" height="14" viewBox="0 0 15 14" fill="none" stroke="#333" stroke-width="1.100"><path d="M7.500 12 C3 8.800 1.500 7 1.500 5 C1.500 3.200 2.900 2 4.500 2 C5.800 2 6.900 2.800 7.500 3.800 C8.100 2.800 9.200 2 10.500 2 C12.100 2 13.500 3.200 13.500 5 C13.500 7 12 8.800 7.500 12Z"/></svg>
<svg class="abs" style="left:1186.500px;top:44px" width="14" height="14" viewBox="0 0 14 14" fill="none" stroke="#333" stroke-width="1.100"><path d="M7 1.800 V8.800 M4 6 L7 9 L10 6 M2 9.500 V11 Q2 12 3 12 H11 Q12 12 12 11 V9.500"/></svg>
<svg class="abs" style="left:1211.500px;top:44px" width="14" height="14" viewBox="0 0 14 14" fill="none" stroke="#333" stroke-width="1.100"><path d="M2 3.500 H12 M2 7 H12 M2 10.500 H12"/><circle cx="9.500" cy="3.500" r=".9" fill="#333"/><circle cx="4.500" cy="7" r=".9" fill="#333"/><circle cx="4.500" cy="10.500" r=".9" fill="#333"/></svg>
<svg class="abs" style="left:1237px;top:44px" width="14" height="14" viewBox="0 0 14 14" fill="none" stroke="#333" stroke-width="1.100"><circle cx="7" cy="4.800" r="2.500"/><path d="M2.800 12.200 Q2.800 8 7 8 Q11.200 8 11.200 12.200Z"/></svg>
<div class="abs" style="left:1269.500px;top:41px;width:5px;height:19px;border-radius:2.500px;background:#4b1fe6"></div>
<!-- window controls -->
<svg class="abs" style="left:1167px;top:8px" width="16" height="16" viewBox="0 0 16 16" fill="none" stroke="#444" stroke-width="1.200"><circle cx="6.500" cy="6.500" r="4.200"/><path d="M9.600 9.600 L13.500 13.500"/></svg>
<div class="abs" style="left:1199.500px;top:19.300px;width:10.500px;height:1.600px;background:#a7afb9"></div>
<svg class="abs" style="left:1228px;top:9px" width="13" height="13" viewBox="0 0 13 13" fill="none" stroke="#444" stroke-width="1"><rect x="1" y="3.500" width="8" height="8" rx="1"/><path d="M3.500 3.500 V2.500 Q3.500 1.500 4.500 1.500 H10.500 Q11.500 1.500 11.500 2.500 V8.500 Q11.500 9.500 10.500 9.500 H9"/></svg>
<svg class="abs" style="left:1258.500px;top:10px" width="12" height="12" viewBox="0 0 12 12" fill="none" stroke="#444" stroke-width="1.100"><path d="M1 1 L11 11 M11 1 L1 11"/></svg>

</body></html>
